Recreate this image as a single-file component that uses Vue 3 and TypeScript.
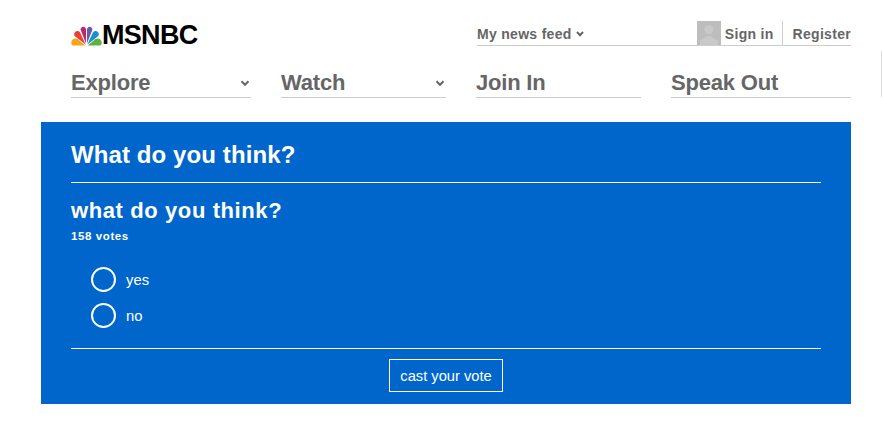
<template>
  <div class="page">
    <header class="masthead">
      <div class="top-row">
        <a class="logo">
          <svg class="peacock" width="31" height="20" viewBox="0 0 31 20">
            <path d="M14.4 19.5 L2 19.5 C-0.8 18.5 -0.3 13 4 12.6 C6 12.5 7.2 13.2 8.2 14.5 Z" fill="#f9a51a" />
            <path d="M14.6 18.6 L3.6 10 C1.8 6.4 6.4 3.4 9 6.2 Z" fill="#ee3f35" />
            <path d="M15 17.6 L9.6 3.8 C9.4 0 14.6 -0.6 15 3.2 Z" fill="#b32d6f" />
            <path d="M16 17.6 L16 3.2 C16.4 -0.6 21.6 0 21.4 3.8 Z" fill="#6b5ba8" />
            <path d="M16.4 18.6 L22 6.2 C24.6 3.4 29.2 6.4 27.4 10 Z" fill="#1c8fd0" />
            <path d="M16.6 19.5 L22.8 14.5 C23.8 13.2 25 12.5 27 12.6 C31.3 13 31.8 18.5 29 19.5 Z" fill="#5fb246" />
          </svg>
          <span class="wordmark">MSNBC</span>
        </a>
        <div class="account">
          <span class="feed">My news feed
            <svg class="chev small" width="8" height="6" viewBox="0 0 8 6"><path d="M1 1 L4 4.2 L7 1" /></svg>
          </span>
          <span class="account-right">
            <span class="avatar">
              <svg width="24" height="24" viewBox="0 0 24 24">
                <circle cx="12" cy="8.5" r="4.5" fill="#c9c9c9" />
                <path d="M3 24 L3 20 C6 17 9 17 10 15 L14 15 C15 17 18 17 21 20 L21 24 Z" fill="#c9c9c9" />
              </svg>
            </span>
            <a class="sign-in">Sign in</a>
            <a class="register">Register</a>
          </span>
        </div>
      </div>
      <nav class="nav">
        <a v-for="item in navItems" :key="item.label" class="nav-item" :class="item.size">
          {{ item.label }}
          <svg v-if="item.menu" class="chev" width="10" height="7" viewBox="0 0 10 7"><path d="M1.5 1.2 L5 4.8 L8.5 1.2" /></svg>
        </a>
      </nav>
    </header>

    <section class="poll">
      <h2 class="poll-title">What do you think?</h2>
      <div class="question">
        <h3>what do you think?</h3>
        <p class="votes">{{ votes }} votes</p>
      </div>
      <ul class="options">
        <li v-for="opt in options" :key="opt"><span class="radio"></span>{{ opt }}</li>
      </ul>
      <div class="actions">
        <button class="vote-btn" type="button">cast your vote</button>
      </div>
    </section>
    <span class="edge"></span>
  </div>
</template>

<script setup lang="ts">
const navItems = [
  { label: 'Explore', menu: true, size: 'wide' },
  { label: 'Watch', menu: true, size: 'narrow' },
  { label: 'Join In', menu: false, size: 'narrow' },
  { label: 'Speak Out', menu: false, size: 'wide' },
]
const options = ['yes', 'no']
const votes = 158
</script>

<style>
html, body {
  background: #fff;
}
</style>

<style scoped>
.page {
  position: relative;
  height: 436px;
  width: 883px;
  overflow: hidden;
  font-family: "Liberation Sans", Arial, sans-serif;
  box-sizing: border-box;
  padding: 0 32px 0 41px;
}

.masthead {
  padding-left: 30px;
}

.top-row {
  display: flex;
  justify-content: space-between;
  height: 46px;
  padding-top: 20px;
  box-sizing: border-box;
}

.logo {
  display: flex;
  align-items: center;
  height: 30px;
}

.peacock {
  display: block;
  margin-top: 1px;
}

.wordmark {
  font-size: 27px;
  font-weight: 700;
  letter-spacing: -0.7px;
  color: #000;
  line-height: 30px;
}

.account {
  display: flex;
  justify-content: space-between;
  align-items: stretch;
  width: 374px;
  height: 26px;
  border-bottom: 1px solid #ccc;
  margin-top: -1px;
  font-size: 14px;
  font-weight: 700;
  color: #666;
  letter-spacing: 0.3px;
}

.feed {
  display: flex;
  align-items: center;
  gap: 4px;
  padding-top: 3px;
}

.account-right {
  display: flex;
  align-items: stretch;
  padding-top: 2px;
}

.avatar {
  width: 24px;
  height: 24px;
  background: #bdbdbd;
  display: block;
}

.avatar svg {
  display: block;
}

.sign-in {
  display: flex;
  align-items: center;
  margin-left: 4px;
  padding-right: 8px;
  border-right: 1px solid #ccc;
  padding-top: 1px;
}

.register {
  display: flex;
  align-items: center;
  margin-left: 10px;
  padding-top: 1px;
}

.chev {
  fill: none;
  stroke: #666;
  stroke-width: 2;
}

.nav {
  display: flex;
  gap: 30px;
  margin-top: 9px;
}

.nav-item {
  display: flex;
  justify-content: space-between;
  align-items: center;
  box-sizing: border-box;
  height: 43px;
  border-bottom: 1px solid #ccc;
  font-size: 22px;
  font-weight: 700;
  color: #666;
  letter-spacing: -0.2px;
  padding-right: 1px;
  padding-top: 13px;
  line-height: 27px;
}

.nav-item .chev {
  margin-top: 2px;
}

.nav-item.wide {
  width: 180px;
}

.nav-item.narrow {
  width: 165px;
}

.poll {
  margin-top: 24px;
  width: 810px;
  height: 282px;
  box-sizing: border-box;
  background: #0066cc;
  color: #fff;
  padding: 0 30px;
  display: flex;
  flex-direction: column;
}

.poll-title {
  margin: 0;
  height: 60px;
  border-bottom: 1px solid #fff;
  font-size: 24px;
  line-height: 66px;
  font-weight: 700;
  letter-spacing: 0.1px;
}

.question {
  padding-top: 16px;
}

.question h3 {
  margin: 0;
  font-size: 22px;
  line-height: 24px;
  font-weight: 700;
  letter-spacing: 0.6px;
}

.votes {
  margin: 6px 0 0;
  font-size: 11.5px;
  line-height: 14px;
  font-weight: 700;
  letter-spacing: 0.6px;
}

.options {
  list-style: none;
  margin: 24px 0 0;
  padding: 0 0 0 20px;
  display: flex;
  flex-direction: column;
  gap: 11px;
}

.options li {
  display: flex;
  align-items: center;
  height: 25px;
  font-size: 14.8px;
}

.radio {
  width: 21px;
  height: 21px;
  border: 2px solid #fff;
  border-radius: 50%;
  margin-right: 10px;
}

.actions {
  margin-top: 20px;
  border-top: 1px solid #fff;
  display: flex;
  justify-content: center;
  padding-top: 10px;
}

.vote-btn {
  width: 114px;
  height: 33px;
  background: transparent;
  border: 1px solid #fff;
  color: #fff;
  font-family: inherit;
  font-size: 14.7px;
  padding: 0;
}

.edge {
  position: absolute;
  left: 881px;
  top: 51px;
  width: 1px;
  height: 46px;
  background: #ddd;
}
</style>
